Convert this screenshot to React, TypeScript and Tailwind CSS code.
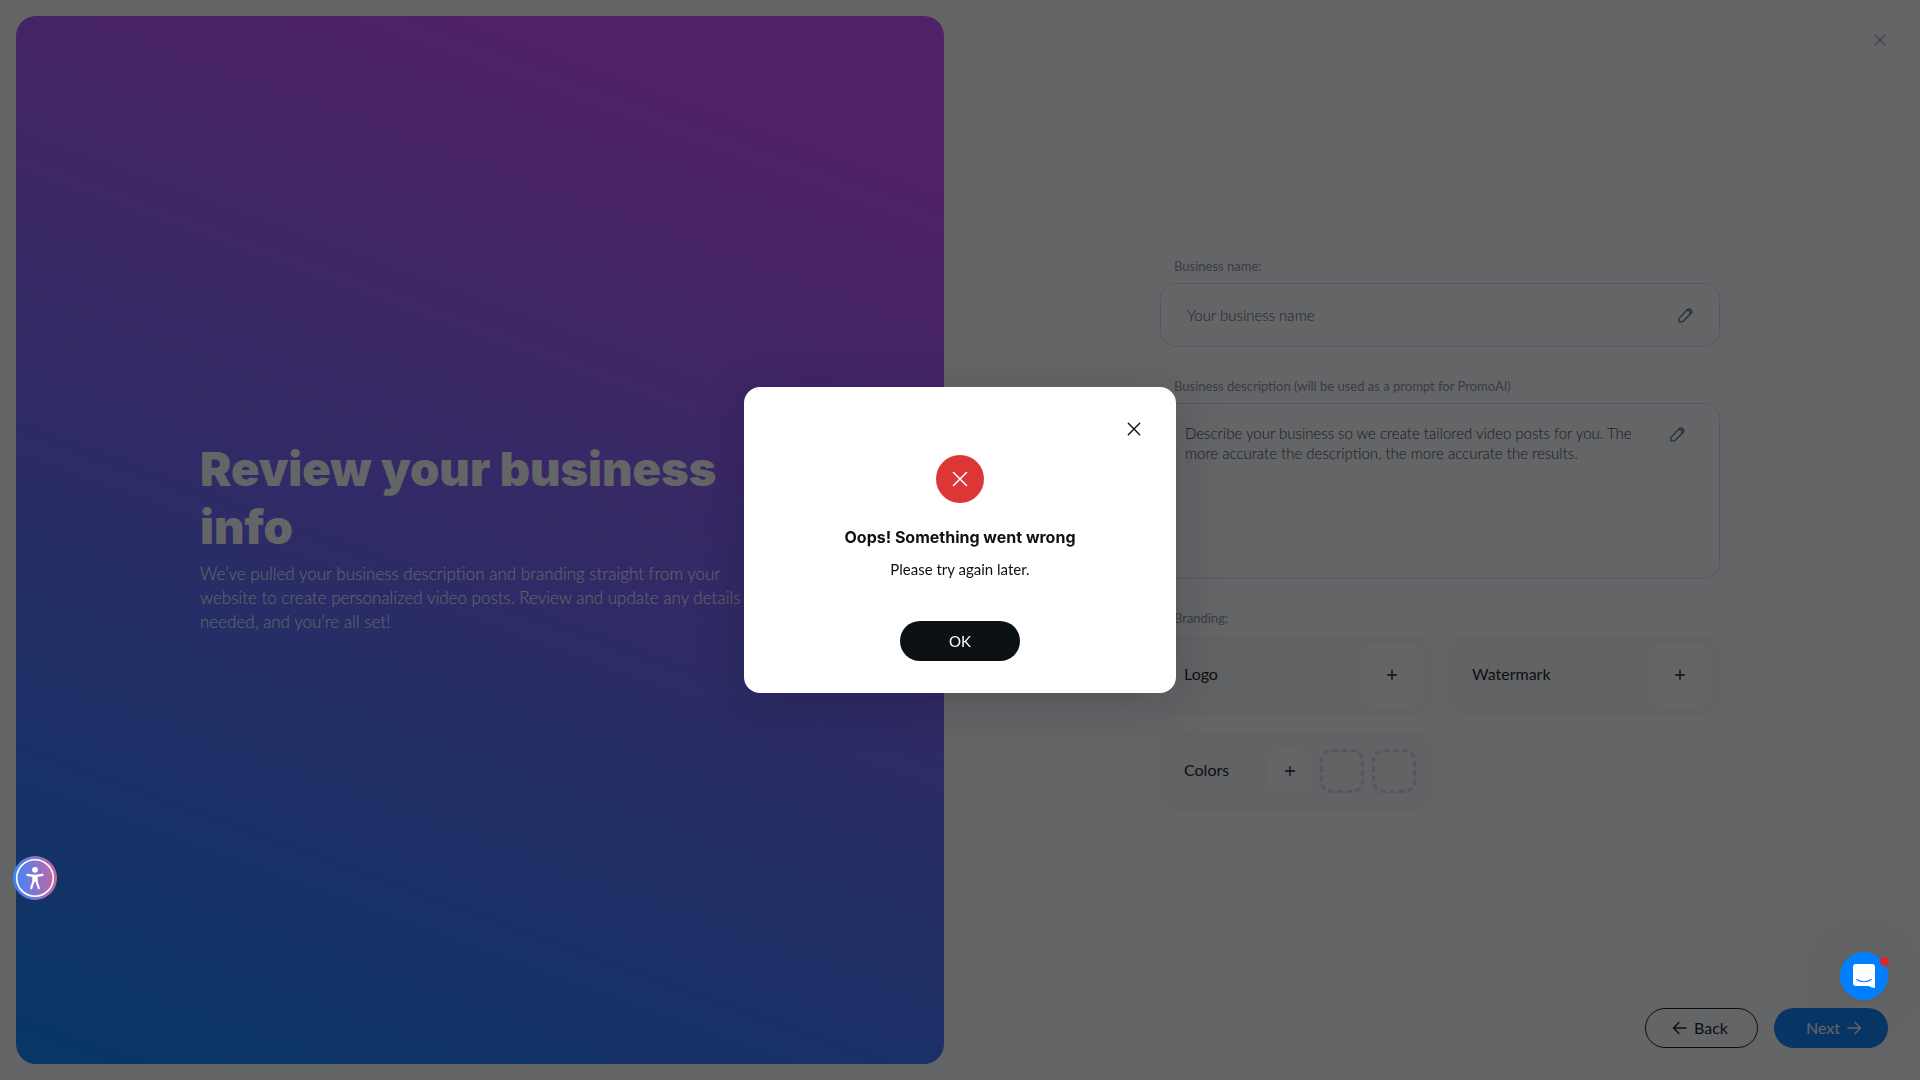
import React, { useState } from 'react';

const Cross = ({ size, className }: { size: number; className?: string }) => (
  <svg width={size} height={size} viewBox="0 0 16 16" fill="none" stroke="currentColor" strokeWidth="1.6" strokeLinecap="round" className={className}>
    <path d="M1.5 1.5l13 13M14.5 1.5l-13 13" />
  </svg>
);

const Plus = () => (
  <svg width="12" height="12" viewBox="0 0 12 12" fill="none" stroke="currentColor" strokeWidth="1.3">
    <path d="M6 1v10M1 6h10" />
  </svg>
);

const Pencil = () => (
  <svg width="15" height="15" viewBox="0 0 16 16" fill="none" stroke="currentColor" strokeWidth="1.4" strokeLinecap="round" strokeLinejoin="round">
    <path d="M1.8 10.3 9.9 1.7a2.6 2.6 0 0 1 3.7-.1l.3.3a2.6 2.6 0 0 1 .1 3.7L5.6 14.2a1.8 1.8 0 0 1-1.3.6H1.7a.7.7 0 0 1-.7-.7v-2.5c0-.5.4-.9.8-1.3z" />
    <path d="M9.3 2.8h2.2a1.2 1.2 0 0 1 1.2 1.2v2.1" />
  </svg>
);

const ArrowLeft = () => (
  <svg width="20" height="20" viewBox="0 0 20 20" fill="none" stroke="currentColor" strokeWidth="1.4" strokeLinecap="round" strokeLinejoin="round">
    <path d="M16 10H3.5M9 4.5 3.5 10 9 15.5" />
  </svg>
);

const ArrowRight = () => (
  <svg width="20" height="20" viewBox="0 0 20 20" fill="none" stroke="currentColor" strokeWidth="1.4" strokeLinecap="round" strokeLinejoin="round">
    <path d="M4 10h12.5M11 4.5l5.5 5.5-5.5 5.5" />
  </svg>
);

const labelClass = 'block pl-3.5 text-[13px] leading-[18px] text-[#8b8e9a]';

function AssetCard({ title }: { title: string }) {
  return (
    <div className="flex h-20 items-center justify-between rounded-2xl bg-[#f8f8fa] pl-6 pr-2">
      <span className="pb-0.5 text-base text-[#0c1114]">{title}</span>
      <button type="button" aria-label={`Add ${title}`} className="flex size-16 items-center justify-center rounded-2xl bg-white text-[#0c1114]">
        <Plus />
      </button>
    </div>
  );
}

function ErrorDialog({ onClose }: { onClose: () => void }) {
  return (
    <div className="fixed inset-0 z-10 flex items-center justify-center bg-[rgba(12,14,17,0.64)]">
      <div
        role="alertdialog"
        aria-labelledby="dialog-title"
        className="flex w-[432px] flex-col items-center rounded-2xl bg-white px-[30px] pt-[30px] pb-8 text-[#0c1114] shadow-[0_12px_48px_rgba(12,17,20,0.2)]"
      >
        <button aria-label="Close" onClick={onClose} className="flex size-6 items-center justify-center self-end">
          <Cross size={14} />
        </button>
        <div className="mt-3.5 flex size-12 items-center justify-center rounded-full bg-[#dd3636] text-white">
          <Cross size={16} />
        </div>
        <h2 id="dialog-title" className="mt-[22px] font-['Inter',sans-serif] text-base leading-6 font-bold">Oops! Something went wrong</h2>
        <p className="mt-2.5 text-[15px] leading-5">Please try again later.</p>
        <button onClick={onClose} className="mt-[42px] h-10 w-[120px] rounded-full bg-[#0c1114] text-[15px] text-white">
          OK
        </button>
      </div>
    </div>
  );
}

export default function App() {
  const [showError, setShowError] = useState(true);

  return (
    <div className="flex min-h-screen bg-white font-['Lato',sans-serif]">
      {/* Left: promo panel */}
      <div className="w-1/2 p-4">
        <section className="flex h-full flex-col justify-center rounded-[20px] bg-[linear-gradient(20deg,#0080ff_0%,#c643fb_88%)] pl-[184px] pr-[176px] pb-1.5 text-white">
          <h1 className="font-['Inter',sans-serif] text-[47px] leading-[58px] font-black">Review your business info</h1>
          <p className="mt-1.5 text-[17px] leading-6 font-light">
            We’ve pulled your business description and branding straight from your website to create personalized video posts. Review and update any details as needed, and you’re all set!
          </p>
        </section>
      </div>

      {/* Right: business form */}
      <div className="flex w-1/2 flex-col">
        <header className="flex justify-end px-7 pt-7 pb-4">
          <button aria-label="Close page" className="flex size-6 items-center justify-center text-[#9296a6]">
            <Cross size={12} />
          </button>
        </header>

        <main className="flex flex-1 flex-col justify-center">
          <form className="mx-auto w-[560px]">
            <label htmlFor="name" className={labelClass}>Business name:</label>
            <div className="mt-2 flex h-16 items-center rounded-2xl border border-[#d9dbe3] px-[26px] text-[#59626b]">
              <input id="name" placeholder="Your business name" className="flex-1 text-[15px] font-light outline-none placeholder:text-[#454c55]" />
              <button type="button" aria-label="Edit name"><Pencil /></button>
            </div>

            <label htmlFor="description" className={`mt-[30px] ${labelClass}`}>
              Business description (will be used as a prompt for PromoAI)
            </label>
            <div className="mt-2 flex h-44 items-start rounded-2xl border border-[#d9dbe3] pl-6 pr-[34px] pt-[19px] text-[#59626b]">
              <textarea
                id="description"
                placeholder="Describe your business so we create tailored video posts for you. The more accurate the description, the more accurate the results."
                className="mr-8 h-36 flex-1 resize-none text-[15px] leading-5 font-light outline-none placeholder:text-[#2b343d]"
              />
              <button type="button" aria-label="Edit description" className="mt-1"><Pencil /></button>
            </div>

            <p className={`mt-[30px] ${labelClass}`}>Branding:</p>
            <div className="mt-2 grid grid-cols-2 gap-4">
              <AssetCard title="Logo" />
              <AssetCard title="Watermark" />
              <div className="flex h-20 items-center gap-2 rounded-2xl bg-[#f8f8fa] pl-6 pr-4">
                <span className="flex-1 pb-0.5 text-base text-[#0c1114]">Colors</span>
                <button type="button" aria-label="Add color" className="flex size-11 items-center justify-center rounded-xl bg-white text-[#0c1114]">
                  <Plus />
                </button>
                <div className="size-11 rounded-xl border-3 border-dashed border-[#d6d8e2]" />
                <div className="size-11 rounded-xl border-3 border-dashed border-[#d6d8e2]" />
              </div>
            </div>
          </form>
        </main>

        <footer className="flex justify-end gap-4 px-8 pt-2 pb-8">
          <button className="flex h-10 w-[113px] items-center gap-1 rounded-full border border-[#0c1114] pl-6 text-base text-[#0c1114]">
            <ArrowLeft />
            Back
          </button>
          <button className="flex h-10 w-[114px] items-center justify-end gap-1 rounded-full bg-[#0080ff] pr-6 text-base text-white">
            Next
            <ArrowRight />
          </button>
        </footer>
      </div>

      {showError && <ErrorDialog onClose={() => setShowError(false)} />}

      {/* Floating widgets */}
      <button
        aria-label="Accessibility menu"
        className="fixed bottom-45 left-[13px] z-20 flex size-11 items-center justify-center rounded-full bg-[linear-gradient(90deg,#3b86ff,#c9659f)]"
      >
        <svg width="44" height="44" viewBox="0 0 44 44" fill="none">
          <circle cx="22" cy="22" r="18.3" stroke="#fff" strokeWidth="1.6" />
          <circle cx="22" cy="13.8" r="2.9" fill="#fff" />
          <path d="M14.4 18.9c5 1.1 10.2 1.1 15.2 0M20.6 20v5.2l-2.4 7M23.4 20v5.2l2.4 7" stroke="#fff" strokeWidth="2.2" strokeLinecap="round" strokeLinejoin="round" />
          <path d="M19.5 19h5v7h-5z" fill="#fff" />
        </svg>
      </button>

      <button
        aria-label="Open chat"
        className="fixed right-8 bottom-20 z-20 flex size-12 items-center justify-center rounded-full bg-[#0080ff] shadow-[0_1px_6px_rgba(0,0,0,0.06),0_2px_90px_rgba(0,0,0,0.18)]"
      >
        <svg width="22" height="24" viewBox="0 0 22 24" fill="none">
          <path d="M2.5 0h17A2.4 2.4 0 0 1 22 2.4V24c-2 0-4.2-.8-6.5-2h-13A2.4 2.4 0 0 1 0 19.6V2.4A2.4 2.4 0 0 1 2.5 0z" fill="#fff" />
          <path d="M3.8 15.5c4 3 10.4 3 14.4 0" stroke="#0080ff" strokeWidth="1.1" strokeLinecap="round" />
        </svg>
        <span className="absolute top-[5px] -right-px size-[9px] rounded-full bg-[#e02424]" />
      </button>
    </div>
  );
}
